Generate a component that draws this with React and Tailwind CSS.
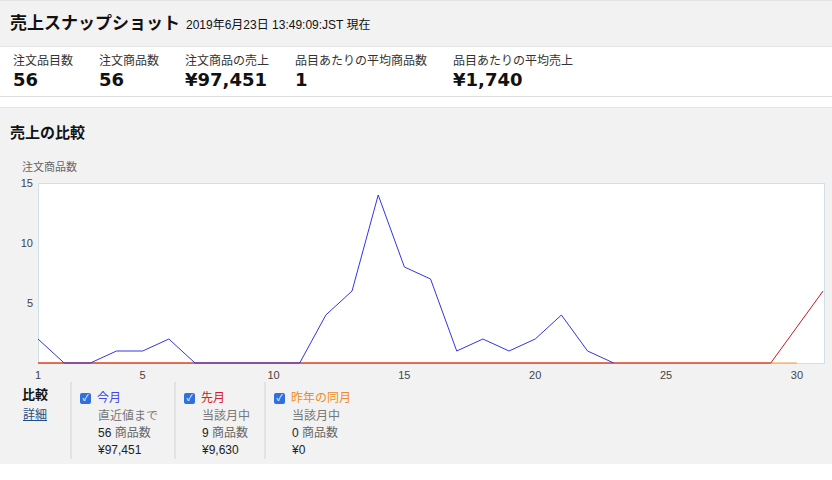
const font = { fontFamily: '"Liberation Sans", "Noto Sans CJK JP", sans-serif' };
const heavy = { fontFamily: '"DejaVu Sans", "Noto Sans CJK JP", sans-serif' };

const today = [2, 0, 0, 1, 1, 2, 0, 0, 0, 0, 0, 4, 6, 14, 8, 7, 1, 2, 1, 2, 4, 1, 0, 0, 0, 0, 0, 0, 0, 0, 0];
const X = (d) => 38 + (d - 1) * 26.17;
const Y = (v) => 188 - v * 12;

const stats = [
  ["注文品目数", "56", "w-[86px]"],
  ["注文商品数", "56", "w-[86px]"],
  ["注文商品の売上", "¥97,451", "w-[110px]"],
  ["品目あたりの平均商品数", "1", "w-[158px]"],
  ["品目あたりの平均売上", "¥1,740", "w-[150px]"],
];

function Chart() {
  const todayPts = today.slice(0, 23).map((v, i) => `${X(i + 1)},${Y(v)}`).join(" ");
  return (
    <svg width="832" height="207" className="block">
      <rect x="38.5" y="8.5" width="786" height="180" fill="#fff" stroke="#cfe0ea" />
      {[5, 10, 15].map((v) => (
        <text key={v} x="33" y={Y(v) + 4} fontSize="11" fill="#444" textAnchor="end">{v}</text>
      ))}
      {[1, 5, 10, 15, 20, 25, 30].map((d) => (
        <text key={d} x={X(d)} y="204" fontSize="11" fill="#444" textAnchor="middle">{d}</text>
      ))}
      <line x1="38" y1="188" x2={X(30)} y2="188" stroke="#f39c38" strokeWidth="1" />
      <polyline points={`38,188 ${X(29)},188 ${X(31)},${Y(6)}`} fill="none" stroke="#c81a1a" strokeWidth="1" />
      <polyline points={`${todayPts}`} fill="none" stroke="#3434e6" strokeWidth="1" />
    </svg>
  );
}

function Legend({ color, label, sub, count, amount, border }) {
  return (
    <div className={`px-2 pt-2 ${border ? "border-l-2 border-[#e2e2e2]" : ""}`}>
      <div className="flex items-center gap-1.5">
        <span className="w-[11px] h-[11px] rounded-[2px] bg-[#2f6fe0] text-white text-[9px] leading-[11px] text-center">✓</span>
        <span className={`text-xs ${color}`}>{label}</span>
      </div>
      <div className="pl-[18px] text-xs leading-[17px] mt-0.5">
        <div className="text-[#777]">{sub}</div>
        <div className="text-[#222]">{count} <span className="text-[#666]">商品数</span></div>
        <div className="text-[#222]">{amount}</div>
      </div>
    </div>
  );
}

export default function App() {
  return (
    <div style={font} className="w-[832px] h-[480px] bg-white text-[#111]">
      <div className="bg-[#f2f2f2] border-t border-[#e4e4e4] h-[47px] flex items-center px-[10px] gap-1.5 border-b">
        <span className="text-[17px] font-bold">売上スナップショット</span>
        <span className="text-xs mt-0.5">2019年6月23日 13:49:09:JST 現在</span>
      </div>
      <div className="h-[50px] flex px-[13px] pt-[6px] border-b border-[#ddd]">
        {stats.map(([l, v, w]) => (
          <div key={l} className={w}>
            <div className="text-xs text-[#333]">{l}</div>
            <div style={heavy} className="text-[18px] font-bold leading-[22px]">{v}</div>
          </div>
        ))}
      </div>
      <div className="bg-[#f2f2f2] mt-[10px] h-[357px] pt-[14px] border-t border-[#e4e4e4]">
        <div className="text-[15px] font-bold px-[10px]">売上の比較</div>
        <div className="text-[11px] text-[#666] px-[22px] mt-[14px]">注文商品数</div>
        <Chart />
        <div className="flex">
          <div className="w-[72px] flex flex-col items-center pt-[3px] border-r-2 border-[#e2e2e2]">
            <span className="text-[13px] font-bold">比較</span>
            <span className="text-xs text-[#1a4f8a] underline mt-0.5">詳細</span>
          </div>
          <div className="w-[102px]">
            <Legend color="text-[#4545e8]" label="今月" sub="直近値まで" count="56" amount="¥97,451" />
          </div>
          <div className="w-[90px]">
            <Legend color="text-[#d42020]" label="先月" sub="当該月中" count="9" amount="¥9,630" border />
          </div>
          <Legend color="text-[#f08a24]" label="昨年の同月" sub="当該月中" count="0" amount="¥0" border />
        </div>
      </div>
    </div>
  );
}
